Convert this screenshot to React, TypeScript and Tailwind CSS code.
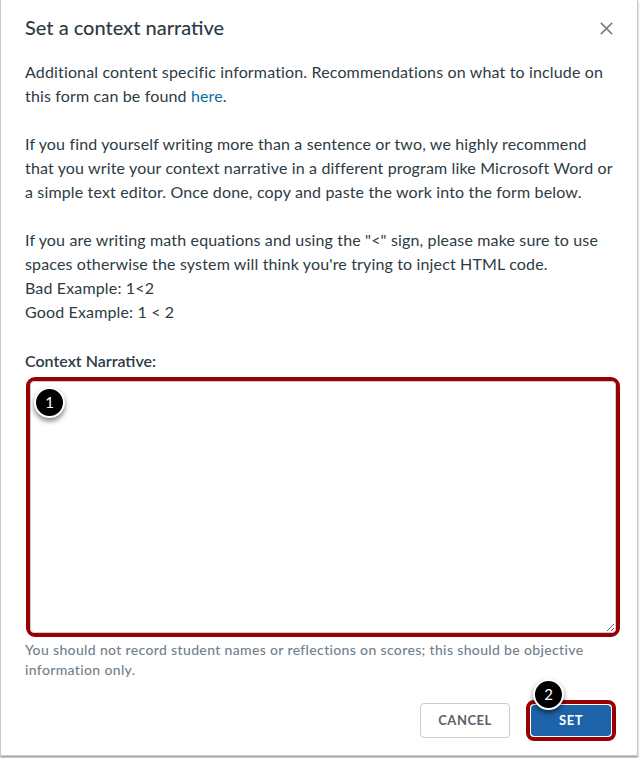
const App = () => {
    return (
        <div className="w-[640px] h-[758px] bg-white" style={{ fontFamily: 'Lato, "Noto Sans", sans-serif' }}>
            <div className="relative w-[638px] h-[756px] border-x border-b border-[#c8c8c8] shadow-[0_2px_2px_rgba(0,0,0,0.35)] px-6 text-[#2d3b45]">
                {/* Header */}
                <div className="flex items-start justify-between pt-[17px] h-[60px]">
                    <h1 className="text-[20px] font-medium leading-[20px]">Set a context narrative</h1>
                    <button className="text-[#73818c] mr-[-1px] mt-[4px]">
                        <svg width="15" height="15" viewBox="0 0 16 16" fill="none" stroke="currentColor" strokeWidth="1.7">
                            <path d="M2 2 L14 14 M14 2 L2 14" />
                        </svg>
                    </button>
                </div>

                {/* Instructions */}
                <div className="text-[16px] leading-[24px] tracking-[0.15px]">
                    <p>
                        Additional content specific information. Recommendations on what to include on this form can be found{' '}
                        <a className="text-[#0770a3]" href="#">here</a>.
                    </p>
                    <p className="mt-6">
                        If you find yourself writing more than a sentence or two, we highly recommend that you write your context narrative in a different program like Microsoft Word or a simple text editor. Once done, copy and paste the work into the form below.
                    </p>
                    <p className="mt-6">
                        If you are writing math equations and using the "&lt;" sign, please make sure to use spaces otherwise the system will think you're trying to inject HTML code.
                        <br />
                        Bad Example: 1&lt;2
                        <br />
                        Good Example: 1 &lt; 2
                    </p>
                </div>

                {/* Field */}
                <label className="block mt-[25px] text-[16px] font-semibold leading-[24px]">Context Narrative:</label>
                <div className="relative mt-[4px] h-[260px] ml-px w-[594px] border-[4px] border-[#990000] rounded-[9px]">
                    <textarea className="w-full h-full block border border-[#c7cdd1] rounded-[4px] bg-white" />
                    <span className="absolute left-[4px] top-[6px] w-[31px] h-[31px] rounded-full bg-black border-2 border-white text-white text-[15px] flex items-center justify-center shadow-[0_3px_5px_rgba(0,0,0,0.5)]">1</span>
                </div>
                <p className="mt-[3px] text-[14px] leading-[20px] text-[#73818c] font-medium tracking-[0.35px]">
                    You should not record student names or reflections on scores; this should be objective information only.
                </p>

                {/* Buttons */}
                <div className="flex justify-end items-center gap-4 mt-[20px] mr-[-3px]">
                    <button className="w-[90px] h-[35px] border border-[#c7cdd1] rounded-[4px] text-[13px] font-bold tracking-[0.5px] text-[#59636b] bg-white">
                        CANCEL
                    </button>
                    <div className="relative border-[4px] border-[#990000] rounded-[8px] p-px">
                        <button className="w-[80px] h-[31px] rounded-[4px] bg-[#1d63a9] text-white text-[13px] font-bold tracking-[0.5px] block">
                            SET
                        </button>
                        <span className="absolute left-[3px] top-[-25px] w-[31px] h-[31px] rounded-full bg-black border-2 border-white text-white text-[15px] flex items-center justify-center shadow-[0_3px_5px_rgba(0,0,0,0.5)]">2</span>
                    </div>
                </div>
            </div>
        </div>
    );
};

export default App;
